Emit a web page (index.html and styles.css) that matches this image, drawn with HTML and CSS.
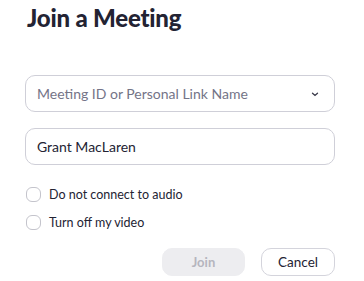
FILE: index.html
```html
<!DOCTYPE html>
<html lang="en">
<head>
    <meta charset="UTF-8" />
    <title>Join a Meeting</title>
    <link rel="stylesheet" href="styles.css">
</head>
<body>
<div class="dialog">
    <h1>Join a Meeting</h1>

    <div class="field field-select">
        <span class="placeholder">Meeting ID or Personal Link Name</span>
        <svg class="chevron" width="8" height="5" viewBox="0 0 8 5">
            <path d="M1.5 1.2l2.5 2.2 2.5-2.2" fill="none" stroke="#3a3a4a" stroke-width="1.3" stroke-linecap="round" />
        </svg>
    </div>

    <div class="field">
        <span class="value">Grant MacLaren</span>
    </div>

    <label class="check">
        <span class="box"></span>
        <span>Do not connect to audio</span>
    </label>
    <label class="check">
        <span class="box"></span>
        <span>Turn off my video</span>
    </label>

    <footer class="actions">
        <button class="btn btn-join" disabled>Join</button>
        <button class="btn btn-cancel">Cancel</button>
    </footer>
</div>
</body>
</html>
```

FILE: styles.css
```css
:root {
    --text: #232333;
    --muted: #747487;
    --border: #cfcfd8;
    --font: 'Lato', sans-serif;
}

*, *::before, *::after { box-sizing: border-box; margin: 0; }

body {
    font-family: var(--font);
    color: var(--text);
    background: #fff;
}

.dialog { width: 364px; padding: 3px 29px 0 25px; }

h1 {
    font-size: 24px; font-weight: 900; line-height: 30px;
    padding-left: 2px; margin-bottom: 42px; letter-spacing: -0.2px;
}

.field {
    height: 37px; border: 1px solid var(--border); border-radius: 10px;
    display: flex; align-items: center; justify-content: space-between;
    padding: 0 15px 0 11px; font-size: 14px; margin-bottom: 16px;
}
.placeholder { color: var(--muted); }
.chevron { margin-top: 1px; }

.check {
    display: flex; align-items: center; gap: 8px;
    font-size: 12.5px; height: 14px; margin-left: 1px; margin-bottom: 14px;
}
.check:first-of-type { margin-top: 22px; }
.box {
    width: 15px; height: 15px; border: 1px solid #c4c4cc;
    border-radius: 6px; background: #fff;
}

.actions {
    display: flex; justify-content: flex-end; gap: 16px; margin-top: 19px;
}
.btn {
    height: 28px; border-radius: 10px; font-family: var(--font);
    font-size: 13px; cursor: pointer;
}
.btn-join {
    width: 83px; background: #ededf0; border: 1px solid #ededf0;
    color: #b5b5be; font-weight: 700;
}
.btn-cancel {
    width: 74px; background: #fff; border: 1px solid #d4d4dc;
    color: var(--text); font-size: 13.5px;
}
```
